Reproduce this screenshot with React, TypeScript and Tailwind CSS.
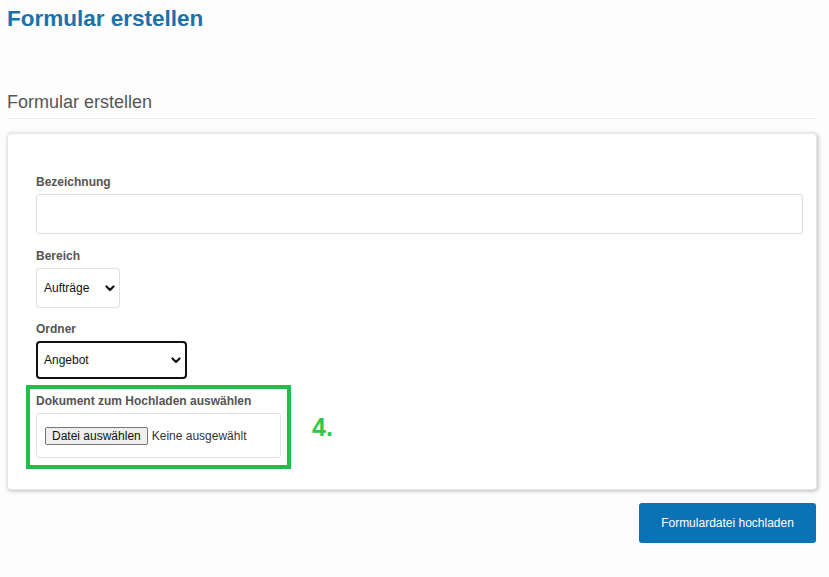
import { ReactNode } from "react";

function Chevron() {
  return (
    <svg width="10" height="7" viewBox="0 0 10 7" className="shrink-0">
      <polyline
        points="1.5,1.5 5,5 8.5,1.5"
        fill="none"
        stroke="#111"
        strokeWidth="2.2"
        strokeLinecap="round"
        strokeLinejoin="round"
      />
    </svg>
  );
}

function Label({ children }: { children: ReactNode }) {
  return (
    <div className="mb-[3px] text-[12px] leading-[17px] font-bold text-[#555]">
      {children}
    </div>
  );
}

export default function App() {
  return (
    <div
      className="min-h-[577px] bg-[#fdfdfd] text-[#222]"
      style={{ fontFamily: '"Liberation Sans", Arial, sans-serif' }}
    >
      <div className="ml-[7px] w-[810px] pt-[6px]">
        <h1 className="text-[22.5px] leading-[25px] font-bold text-[#1b72a8]">
          Formular erstellen
        </h1>

        <h2 className="mt-[61px] border-b border-[#ececec] pb-[5px] text-[18px] leading-[21px] text-[#555]">
          Formular erstellen
        </h2>

        <div className="mt-[14px] rounded-[4px] border border-[#e6e6e6] bg-white pt-[40px] pr-[13px] pb-[20px] pl-[28px] shadow-[1px_1px_4px_rgba(0,0,0,0.28)]">
          <Label>Bezeichnung</Label>
          <div className="h-[40px] w-full rounded-[3px] border border-[#dcdcdc] bg-white" />

          <div className="mt-[14px]">
            <Label>Bereich</Label>
            <div className="flex h-[40px] w-[84px] items-center justify-between rounded-[3px] border border-[#e0e0e0] bg-white pr-[4px] pl-[7px] text-[12px] text-[#111]">
              <span>Aufträge</span>
              <Chevron />
            </div>
          </div>

          <div className="mt-[13px]">
            <Label>Ordner</Label>
            <div className="flex h-[38px] w-[151px] items-center justify-between rounded-[4px] border-2 border-[#111] bg-white pr-[4px] pl-[6px] text-[12px] text-[#111]">
              <span>Angebot</span>
              <Chevron />
            </div>
          </div>

          <div className="mt-[6px] -ml-[10px] flex items-center gap-[21px]">
            <div className="border-4 border-[#1fbf4c] px-[6px] pt-[4px] pb-[7px]">
              <Label>Dokument zum Hochladen auswählen</Label>
              <div className="flex h-[45px] w-[245px] items-center rounded-[3px] border border-[#e0e0e0] bg-white pl-[8px] text-[12px]">
                <span className="flex h-[18px] items-center rounded-[2px] border border-[#767676] bg-[#efefef] px-[6px] text-[#111]">
                  Datei auswählen
                </span>
                <span className="ml-[4px] text-[#333]">Keine ausgewählt</span>
              </div>
            </div>
            <span className="text-[25px] leading-none font-bold text-[#2ec84a]">
              4.
            </span>
          </div>
        </div>

        <div className="mt-[13px] flex justify-end pr-[1px]">
          <button className="h-[40px] w-[177px] rounded-[3px] bg-[#0a72b5] text-[12px] text-white">
            Formulardatei hochladen
          </button>
        </div>
      </div>
    </div>
  );
}
